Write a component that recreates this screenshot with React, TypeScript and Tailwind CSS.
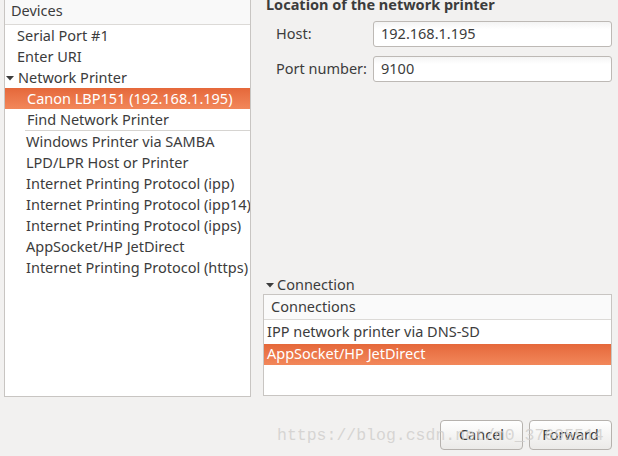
import React from "react";

const font = { fontFamily: '"Noto Sans", "DejaVu Sans", sans-serif' };

function Arrow() {
  return (
    <svg width={8} height={8} viewBox="0 0 8 8" className="shrink-0">
      <path d="M0 2 L8 2 L4 6.5 Z" fill="#3c3c3c" />
    </svg>
  );
}

function DeviceRow({ label, indent, selected }: { label: string; indent: string; selected?: boolean }) {
  return (
    <div
      className={
        "flex h-[21px] items-center whitespace-nowrap " +
        indent +
        (selected ? " bg-gradient-to-b from-[#e5683a] to-[#f2875a] text-white" : " text-[#3c3c3c]")
      }
    >
      {label}
    </div>
  );
}

export default function App() {
  return (
    <div className="relative flex h-[456px] w-[618px] overflow-hidden bg-[#f2f1f0] text-[14.5px] text-[#3c3c3c]" style={font}>
      {/* Devices list */}
      <div className="ml-[4px] flex h-[397px] w-[247px] flex-col overflow-hidden border-x border-b border-[#c8c5c2] bg-white">
        <div className="flex h-[25px] shrink-0 items-center border-b border-[#dcdad7] bg-[#f9f9f9] pb-[3px] pl-[6px]">Devices</div>
        <DeviceRow label="Serial Port #1" indent="pl-[12px]" />
        <DeviceRow label="Enter URI" indent="pl-[12px]" />
        <div className="flex h-[21px] items-center gap-[4px] pl-[1px]">
          <Arrow />
          <span>Network Printer</span>
        </div>
        <DeviceRow label="Canon LBP151 (192.168.1.195)" indent="pl-[22px]" selected />
        <DeviceRow label="Find Network Printer" indent="pl-[22px]" />
        <div className="ml-[20px] h-px bg-[#d6d4d1]" />
        <DeviceRow label="Windows Printer via SAMBA" indent="pl-[21px]" />
        <DeviceRow label="LPD/LPR Host or Printer" indent="pl-[21px]" />
        <DeviceRow label="Internet Printing Protocol (ipp)" indent="pl-[21px]" />
        <DeviceRow label="Internet Printing Protocol (ipp14)" indent="pl-[21px]" />
        <DeviceRow label="Internet Printing Protocol (ipps)" indent="pl-[21px]" />
        <DeviceRow label="AppSocket/HP JetDirect" indent="pl-[21px]" />
        <DeviceRow label="Internet Printing Protocol (https)" indent="pl-[21px]" />
      </div>

      {/* Right side */}
      <div className="flex flex-1 flex-col">
        <div className="mt-[-6px] pl-[15px] font-bold">Location of the network printer</div>
        <div className="mt-[5px] flex items-center pl-[25px] pr-[6px]">
          <span className="w-[97px]">Host:</span>
          <div className="flex h-[26px] flex-1 items-center rounded-[3px] border border-[#bdb9b5] bg-gradient-to-b from-[#f4f4f4] to-white to-[30%] pl-[7px]">
            192.168.1.195
          </div>
        </div>
        <div className="mt-[9px] flex items-center pl-[25px] pr-[6px]">
          <span className="w-[97px]">Port number:</span>
          <div className="flex h-[26px] flex-1 items-center rounded-[3px] border border-[#bdb9b5] bg-gradient-to-b from-[#f4f4f4] to-white to-[30%] pl-[7px]">
            9100
          </div>
        </div>

        <div className="mt-[195px] flex h-[16px] items-center gap-[3px] pl-[15px]">
          <Arrow />
          <span>Connection</span>
        </div>
        <div className="ml-[12px] mr-[6px] mt-[1px] flex h-[102px] flex-col border border-[#c8c5c2] bg-white">
          <div className="flex h-[25px] shrink-0 items-center border-b border-[#dcdad7] bg-[#fafafa] pl-[7px]">Connections</div>
          <div className="flex h-[24px] items-center pl-[3px]">IPP network printer via DNS-SD</div>
          <div className="flex h-[21px] items-center bg-gradient-to-b from-[#e5683a] to-[#f2875a] pl-[3px] text-white">
            AppSocket/HP JetDirect
          </div>
        </div>

        <div className="mt-[24px] flex justify-end gap-[6px] pr-[6px]">
          <button className="h-[30px] w-[83px] rounded-[4px] border border-[#b6b2ae] bg-gradient-to-b from-white to-[#ebeae8] text-[#3c3c3c]">
            Cancel
          </button>
          <button className="h-[30px] w-[83px] rounded-[4px] border border-[#b6b2ae] bg-gradient-to-b from-white to-[#ebeae8] text-[#3c3c3c]">
            Forward
          </button>
        </div>
      </div>

      {/* watermark */}
      <div
        className="pointer-events-none absolute left-[277px] top-[424px] whitespace-nowrap text-[16.5px] text-[#cfcdcb]/80"
        style={{ fontFamily: '"Liberation Mono", monospace' }}
      >
        https://blog.csdn.net/m0_37695514
      </div>
    </div>
  );
}
